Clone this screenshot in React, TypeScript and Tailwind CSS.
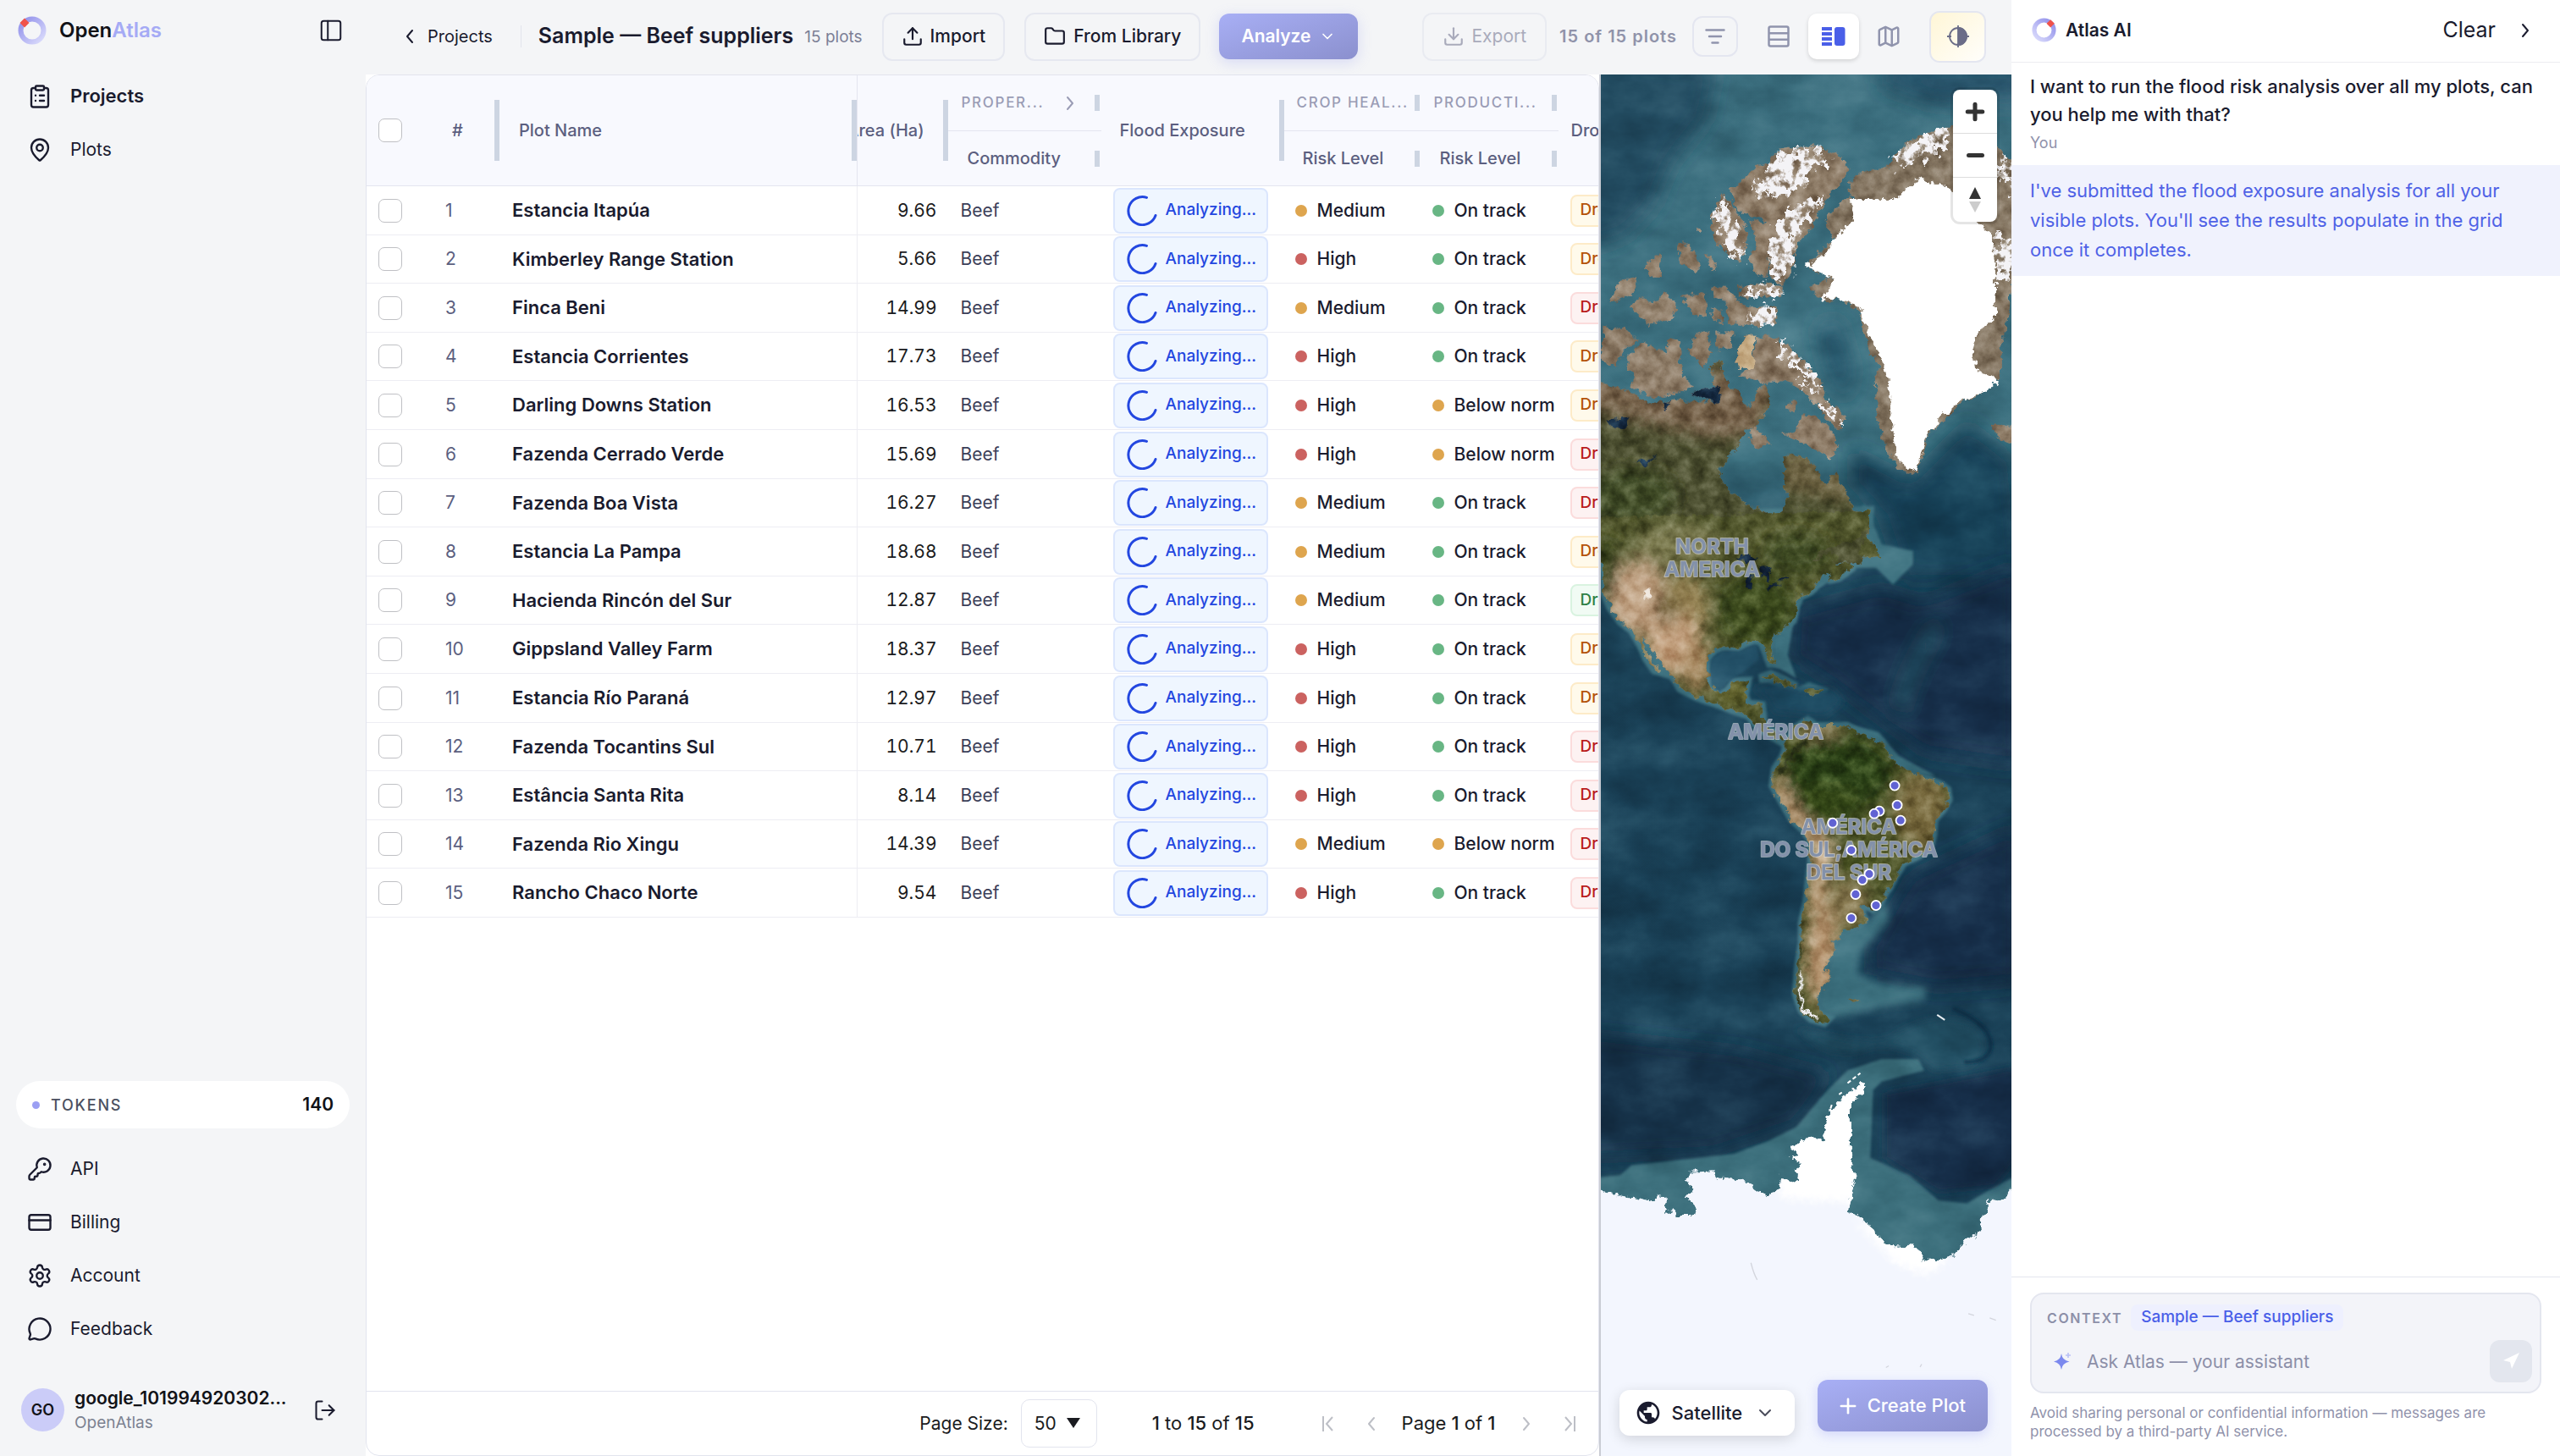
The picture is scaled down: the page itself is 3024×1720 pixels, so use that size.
import React from "react";
import {
  ClipboardList,
  CreditCard,
  Download,
  Folder,
  KeyRound,
  LogOut,
  Map as MapIcon,
  MapPin,
  MessageCircle,
  Navigation,
  PanelLeft,
  Plus,
  Settings,
  Upload,
} from "lucide-react";
import { MdPublic } from "react-icons/md";

type Level = "High" | "Medium";
type Production = "On track" | "Below norm";
type Drought = "amber" | "red" | "green";

interface Plot {
  name: string;
  area: string;
  crop: Level;
  production: Production;
  drought: Drought;
}

const plots: Plot[] = [
  { name: "Estancia Itapúa", area: "9.66", crop: "Medium", production: "On track", drought: "amber" },
  { name: "Kimberley Range Station", area: "5.66", crop: "High", production: "On track", drought: "amber" },
  { name: "Finca Beni", area: "14.99", crop: "Medium", production: "On track", drought: "red" },
  { name: "Estancia Corrientes", area: "17.73", crop: "High", production: "On track", drought: "amber" },
  { name: "Darling Downs Station", area: "16.53", crop: "High", production: "Below norm", drought: "amber" },
  { name: "Fazenda Cerrado Verde", area: "15.69", crop: "High", production: "Below norm", drought: "red" },
  { name: "Fazenda Boa Vista", area: "16.27", crop: "Medium", production: "On track", drought: "red" },
  { name: "Estancia La Pampa", area: "18.68", crop: "Medium", production: "On track", drought: "amber" },
  { name: "Hacienda Rincón del Sur", area: "12.87", crop: "Medium", production: "On track", drought: "green" },
  { name: "Gippsland Valley Farm", area: "18.37", crop: "High", production: "On track", drought: "amber" },
  { name: "Estancia Río Paraná", area: "12.97", crop: "High", production: "On track", drought: "amber" },
  { name: "Fazenda Tocantins Sul", area: "10.71", crop: "High", production: "On track", drought: "red" },
  { name: "Estância Santa Rita", area: "8.14", crop: "High", production: "On track", drought: "red" },
  { name: "Fazenda Rio Xingu", area: "14.39", crop: "Medium", production: "Below norm", drought: "red" },
  { name: "Rancho Chaco Norte", area: "9.54", crop: "High", production: "On track", drought: "red" },
];

const droughtStyle: Record<Drought, string> = {
  amber: "border-[#fdebc8] bg-[#fffaeb] text-[#b45309]",
  red: "border-[#fbdcdc] bg-[#fdf2f2] text-[#b91c1c]",
  green: "border-[#d9f3e0] bg-[#f1fbf4] text-[#2f8046]",
};

/* ---------- small drawings ---------- */

function Logo({ id, flip = false, className }: { id: string; flip?: boolean; className: string }) {
  return (
    <svg viewBox="0 0 34 34" className={className} aria-hidden="true">
      <defs>
        <linearGradient id={id} x1={flip ? "1" : "0"} y1="0" x2={flip ? "0" : "1"} y2="1">
          <stop offset="0" stopColor="#8f8eea" />
          <stop offset="1" stopColor="#dcddfc" />
        </linearGradient>
      </defs>
      <circle cx="17" cy="17" r="13.5" fill="none" stroke={`url(#${id})`} strokeWidth="6" />
      <path d={flip ? "M26 2.5l5.5 5.5-5.5 5.5-5.5-5.5z" : "M8 2.5l5.5 5.5-5.5 5.5-5.5-5.5z"} fill="#f0524b" />
    </svg>
  );
}

function Chevron({ dir, className }: { dir: "left" | "right" | "down"; className: string }) {
  const d = { left: "M15 5l-6 7 6 7", right: "M9 5l6 7-6 7", down: "M6 9l6 6 6-6" }[dir];
  return (
    <svg viewBox="0 0 24 24" fill="none" stroke="currentColor" strokeWidth="2" strokeLinecap="round" strokeLinejoin="round" className={className} aria-hidden="true">
      <path d={d} />
    </svg>
  );
}

function PageEdge({ end = false }: { end?: boolean }) {
  return (
    <svg viewBox="0 0 24 24" fill="none" stroke="currentColor" strokeWidth="2" className="size-6" aria-hidden="true">
      <path d={end ? "M7 4l7 8-7 8M18 3v18" : "M17 4l-7 8 7 8M6 3v18"} />
    </svg>
  );
}

function RowsIcon() {
  return (
    <svg viewBox="0 0 26 26" fill="none" stroke="currentColor" strokeWidth="2.5" className="size-[26px]" aria-hidden="true">
      <rect x="1.5" y="1.5" width="23" height="23" rx="2" />
      <path d="M1.5 9.2h23M1.5 16.8h23" />
    </svg>
  );
}

function SplitIcon() {
  return (
    <svg viewBox="0 0 28 22" fill="currentColor" className="h-[22px] w-7" aria-hidden="true">
      <path d="M0 0h12v4H0zM0 6h12v4H0zM0 12h12v4H0zM0 18h12v4H0z" />
      <rect x="15" y="0" width="12.5" height="22" rx="3" />
    </svg>
  );
}

function SunIcon() {
  return (
    <svg viewBox="0 0 28 28" fill="none" stroke="currentColor" strokeWidth="1.8" className="size-7" aria-hidden="true">
      <circle cx="14" cy="14" r="10" />
      <path d="M14 4a10 10 0 0 1 0 20z" fill="currentColor" />
      <path d="M14 1v5M14 22v5M1 14h5M22 14h5" />
    </svg>
  );
}

function SparkleIcon() {
  return (
    <svg viewBox="0 0 22 22" className="size-[22px]" aria-hidden="true">
      <path d="M9 2q1 8 9.5 9.5Q10 13 9 21q-1-8-9-9.5Q8 10 9 2z" fill="#7c89ee" />
      <path d="M17 1v6M14 4h6" stroke="#b9c0f6" strokeWidth="1.6" />
    </svg>
  );
}

function Spinner() {
  return (
    <svg viewBox="0 0 36 36" fill="none" stroke="#2347e0" strokeWidth="3" strokeLinecap="round" className="size-9 shrink-0" aria-hidden="true">
      <path d="M23.5 2.4A16.5 16.5 0 1 0 34 23.5" />
    </svg>
  );
}

/* ---------- sidebar ---------- */

function NavLink({ icon: Icon, label, active = false }: { icon: React.ElementType; label: string; active?: boolean }) {
  return (
    <a href="#" className="flex h-[63px] items-center gap-[21px] pl-8 text-[#1a1b2e]">
      <Icon className="size-[30px]" strokeWidth={1.9} />
      <span className={active ? "text-[22px] font-semibold" : "text-[21px]"}>{label}</span>
    </a>
  );
}

function Sidebar() {
  return (
    <aside className="flex w-[432px] shrink-0 flex-col bg-[#f4f5f7] pb-[23px]">
      <div className="mb-[10px] flex h-[72px] items-center pr-[26px] pl-[21px]">
        <Logo id="brand-ring" className="size-[34px]" />
        <span className="ml-[15px] text-[24px] font-semibold text-[#111217]">
          Open<span className="text-[#a5aaf5]">Atlas</span>
        </span>
        <button type="button" aria-label="Collapse sidebar" className="ml-auto text-[#1a1b2e]">
          <PanelLeft className="size-[30px]" strokeWidth={1.6} />
        </button>
      </div>
      <nav aria-label="Main">
        <NavLink icon={ClipboardList} label="Projects" active />
        <NavLink icon={MapPin} label="Plots" />
      </nav>
      <div className="mx-[19px] mt-auto mb-4 flex h-14 items-center rounded-full bg-white px-[19px]">
        <span className="size-[9px] rounded-full bg-[#9b9ff3]" />
        <span className="ml-[13px] text-[18px] font-medium tracking-widest text-[#4b5060]">TOKENS</span>
        <span className="ml-auto text-[21px] font-semibold text-[#111217]">140</span>
      </div>
      <nav aria-label="Account">
        <NavLink icon={KeyRound} label="API" />
        <NavLink icon={CreditCard} label="Billing" />
        <NavLink icon={Settings} label="Account" />
        <NavLink icon={MessageCircle} label="Feedback" />
      </nav>
      <div className="mt-[33px] flex h-[63px] items-center pr-[34px] pl-[25px]">
        <span className="flex size-[51px] items-center justify-center rounded-full bg-[#cbccf8] text-[18px] font-semibold text-[#111217]">GO</span>
        <div className="ml-3">
          <p className="text-[21px] leading-[30px] font-semibold text-[#111217]">google_101994920302...</p>
          <p className="text-[19px] leading-[28px] text-[#7c8291]">OpenAtlas</p>
        </div>
        <button type="button" aria-label="Log out" className="ml-auto text-[#1a1b2e]">
          <LogOut className="size-7" strokeWidth={1.75} />
        </button>
      </div>
    </aside>
  );
}

/* ---------- toolbar ---------- */

function Toolbar() {
  return (
    <header className="flex h-[88px] shrink-0 items-center bg-[#f4f5f7] pr-[30px] pb-[2px] pl-10 whitespace-nowrap text-[#1a1b2e]">
      <a href="#" className="flex items-center gap-[9px] text-[20px]">
        <Chevron dir="left" className="size-6" />
        Projects
      </a>
      <span className="ml-[33px] h-[26px] w-px bg-[#e2e4ec]" />
      <h1 className="ml-5 text-[25px] font-semibold">Sample — Beef suppliers</h1>
      <span className="mt-[3px] ml-[13px] text-[19px] text-[#7c8096]">15 plots</span>
      <button type="button" className="ml-[23px] flex h-[57px] items-center gap-2 rounded-xl border-2 border-[#e6e8f0] px-[21px] text-[21px] font-medium">
        <Upload className="size-[26px]" strokeWidth={2} />
        Import
      </button>
      <button type="button" className="ml-[23px] flex h-[57px] items-center gap-[9px] rounded-xl border-2 border-[#e6e8f0] px-[21px] text-[21px] font-medium">
        <Folder className="size-[26px]" strokeWidth={2} />
        From Library
      </button>
      <button type="button" className="ml-[22px] flex h-[54px] items-center gap-[9px] rounded-xl bg-linear-to-br from-[#a8aff5] to-[#8b90ce] px-[26px] text-[21px] font-semibold text-white shadow-[0_4px_16px_rgba(150,155,240,0.3)]">
        Analyze
        <Chevron dir="down" className="size-5" />
      </button>
      <button type="button" disabled className="ml-auto flex h-[57px] items-center gap-2 rounded-xl border-2 border-[#e9ebf1] px-[22px] text-[21px] text-[#a9abbb]">
        <Download className="size-[26px]" strokeWidth={2} />
        Export
      </button>
      <span className="ml-[15px] text-[20px] font-semibold tracking-wider text-[#9093aa]">15 of 15 plots</span>
      <button type="button" aria-label="Filter" className="ml-[18px] flex h-12 w-[54px] items-center justify-center rounded-xl border-2 border-[#e4e6f0] text-[#9094ad]">
        <svg viewBox="0 0 24 18" fill="none" stroke="currentColor" strokeWidth="2.5" strokeLinecap="round" className="h-[18px] w-6" aria-hidden="true">
          <path d="M1.5 1.5h21M5 9h14M8.5 16.5h7" />
        </svg>
      </button>
      <div className="mx-[18px] flex gap-[5px] text-[#9094ad]">
        <button type="button" aria-label="Grid view" className="flex h-[54px] w-[60px] items-center justify-center">
          <RowsIcon />
        </button>
        <button type="button" aria-label="Split view" aria-pressed="true" className="flex h-[54px] w-[60px] items-center justify-center rounded-[10px] bg-white text-[#4a5fe8] shadow-[0_2px_5px_rgba(0,0,0,0.14)]">
          <SplitIcon />
        </button>
        <button type="button" aria-label="Map view" className="flex h-[54px] w-[60px] items-center justify-center">
          <MapIcon className="size-[30px]" />
        </button>
      </div>
      <button type="button" aria-label="Toggle contrast" className="flex h-[61px] w-[67px] items-center justify-center rounded-xl border-2 border-[#e4e6f0] bg-linear-to-br from-[#fff6d6] to-[#fffefb] text-[#6b6d88]">
        <SunIcon />
      </button>
    </header>
  );
}

/* ---------- grid ---------- */

const th = "p-0 border-b border-[#e4e5ef] bg-[#f8f9fe] font-medium text-[20px] text-[#5c5f80] text-left";
const td = "p-0 border-b border-[#ededf3] overflow-hidden";
const checkbox = "block size-7 appearance-none rounded-[7px] border border-[#bfc0c4] bg-white checked:bg-[#4a5fe8]";

function HeadCell({ children, tall = false, className = "" }: { children: React.ReactNode; tall?: boolean; className?: string }) {
  return (
    <div className={`flex items-center justify-between overflow-hidden whitespace-nowrap ${className}`}>
      {children}
      <span className={tall ? "h-[72px] w-[6px] shrink-0 bg-[#cdd5e2]" : "mr-[2px] h-[19px] w-[6px] shrink-0 bg-[#cdd5e2]"} />
    </div>
  );
}

function Status({ label }: { label: Level | Production }) {
  const dot = label === "High" ? "bg-[#cb6260]" : label === "On track" ? "bg-[#68b684]" : "bg-[#dea54e]";
  return (
    <div className="flex items-center gap-3 pl-[13px] text-[21px] font-medium whitespace-nowrap text-[#1a1b2e]">
      <span className={`size-[14px] shrink-0 rounded-full ${dot}`} />
      {label}
    </div>
  );
}

function Grid() {
  return (
    <section aria-label="Plots" className="flex min-w-0 flex-3 flex-col bg-white">
      <div className="flex grow flex-col overflow-hidden rounded-2xl border border-[#e2e4ee] bg-white">
        <table className="w-full table-fixed border-separate border-spacing-0">
          <colgroup>
            <col className="w-[72px]" />
            <col className="w-[85px]" />
            <col />
            <col className="w-[107px]" />
            <col className="w-[181px]" />
            <col className="w-[216px]" />
            <col className="w-[162px]" />
            <col className="w-[162px]" />
            <col className="w-[47px]" />
          </colgroup>
          <thead>
            <tr className="h-[66px]">
              <th rowSpan={2} className={`${th} pl-[14px]`}>
                <input type="checkbox" aria-label="Select all plots" className={checkbox} />
              </th>
              <th rowSpan={2} className={th}>
                <HeadCell tall className="pl-[29px]">#</HeadCell>
              </th>
              <th rowSpan={2} className={`${th} border-r`}>
                <HeadCell tall className="pl-[23px]">Plot Name</HeadCell>
              </th>
              <th rowSpan={2} className={th}>
                <div className="flex items-center justify-end gap-[22px] overflow-hidden whitespace-nowrap">
                  Area (Ha)
                  <span className="h-[72px] w-[6px] shrink-0 bg-[#cdd5e2]" />
                </div>
              </th>
              <th className={th}>
                <div className="flex items-center pl-4 text-[17px] tracking-widest whitespace-nowrap text-[#9a9cb5]">
                  PROPER...
                  <Chevron dir="right" className="ml-auto size-6" />
                  <span className="mr-[2px] ml-[17px] h-[19px] w-[6px] shrink-0 bg-[#cdd5e2]" />
                </div>
              </th>
              <th rowSpan={2} className={th}>
                <HeadCell tall className="pl-[22px]">Flood Exposure</HeadCell>
              </th>
              <th className={th}>
                <HeadCell className="pl-[15px] text-[17px] tracking-widest text-[#9a9cb5]">CROP HEAL...</HeadCell>
              </th>
              <th className={th}>
                <HeadCell className="pl-[15px] text-[17px] tracking-widest text-[#9a9cb5]">PRODUCTI...</HeadCell>
              </th>
              <th rowSpan={2} className={`${th} overflow-hidden pl-[15px] whitespace-nowrap`}>Drought</th>
            </tr>
            <tr className="h-[65px]">
              <th className={th}>
                <HeadCell className="pl-[23px]">Commodity</HeadCell>
              </th>
              <th className={th}>
                <HeadCell className="pl-[22px]">Risk Level</HeadCell>
              </th>
              <th className={th}>
                <HeadCell className="pl-[22px]">Risk Level</HeadCell>
              </th>
            </tr>
          </thead>
          <tbody>
            {plots.map((p, i) => (
              <tr key={p.name} className="h-[58px] [&:nth-child(5n+2)]:h-[57px] [&:nth-child(5n+4)]:h-[57px]">
                <td className={`${td} pl-[14px]`}>
                  <input type="checkbox" aria-label={`Select ${p.name}`} className={checkbox} />
                </td>
                <td className={`${td} pl-[21px] text-[21px] text-[#5c5f80]`}>{i + 1}</td>
                <td className={`${td} border-r pl-[15px] text-[22px] font-semibold whitespace-nowrap text-[#1a1b2e]`}>{p.name}</td>
                <td className={`${td} pr-[13px] text-right text-[21px] text-[#1a1b20] tabular-nums`}>{p.area}</td>
                <td className={`${td} pl-[15px] text-[21px] text-[#3c4059]`}>Beef</td>
                <td className={`${td} pl-[14px]`}>
                  <div className="flex h-[54px] w-[183px] items-center gap-[10px] rounded-lg border-2 border-[#dbe6fd] bg-[#eff6ff] pl-[14px] text-[19px] font-medium text-[#2347e0]">
                    <Spinner />
                    Analyzing...
                  </div>
                </td>
                <td className={td}>
                  <Status label={p.crop} />
                </td>
                <td className={td}>
                  <Status label={p.production} />
                </td>
                <td className={`${td} pl-[14px]`}>
                  <div className={`flex h-[38px] w-[120px] items-center rounded-lg border-2 pl-[10px] text-[19px] font-medium ${droughtStyle[p.drought]}`}>Drought</div>
                </td>
              </tr>
            ))}
          </tbody>
        </table>
        <footer className="mt-auto flex h-[76px] items-center justify-end border-t border-[#e2e4ee] pr-[22px] text-[21px] whitespace-nowrap text-[#1a1b20]">
          <label htmlFor="page-size">Page Size:</label>
          <div className="relative ml-[15px]">
            <select id="page-size" defaultValue="50" className="h-[57px] w-[90px] appearance-none rounded-[10px] border border-[#e2e4ee] bg-white pl-[15px]">
              <option>50</option>
            </select>
            <svg viewBox="0 0 16 12" className="pointer-events-none absolute top-[22px] right-5 h-3 w-4" aria-hidden="true">
              <path d="M0 0h16L8 12z" fill="#1a1b20" />
            </svg>
          </div>
          <p className="ml-[65px] text-[22px]">
            <span className="font-medium">1</span> to <span className="font-medium">15</span> of <span className="font-medium">15</span>
          </p>
          <div className="ml-[75px] flex items-center text-[#bdbfc6]">
            <button type="button" disabled aria-label="First page">
              <PageEdge />
            </button>
            <button type="button" disabled aria-label="Previous page" className="ml-[27px]">
              <Chevron dir="left" className="size-6" />
            </button>
            <p className="mx-6 text-[22px] text-[#1a1b20]">
              Page <span className="font-medium">1</span> of <span className="font-medium">1</span>
            </p>
            <button type="button" disabled aria-label="Next page">
              <Chevron dir="right" className="size-6" />
            </button>
            <button type="button" disabled aria-label="Last page" className="ml-[27px]">
              <PageEdge end />
            </button>
          </div>
        </footer>
      </div>
    </section>
  );
}

/* ---------- map ---------- */

const northA =
  "M0 1040L20 1050 60 1060 110 1075 150 1090 170 1115 230 1110 270 1100 320 1110 370 1105 420 1110 410 1030 400 990 430 970 460 1060 490 1070 510 1100 530 1130 550 1100 570 1060 590 1055 605 1075 600 1130 570 1180 530 1200 500 1245 460 1290 430 1330 435 1370 470 1410 520 1440 570 1465 595 1470 600 1500 620 1545 635 1530 630 1480 655 1460 668 1420 655 1380 660 1330 650 1290 700 1285 740 1300 770 1330 790 1370 810 1385 835 1340 850 1370 880 1420 900 1460 960 1500 955 1540 930 1640 0 1640Z";
const northB =
  "M0 -20L960 -40 955 10 900 50 840 60 800 75 750 110 770 110 830 80 845 95 830 120 850 120 890 115 895 130 850 160 820 165 810 150 780 165 760 190 750 200 715 215 700 245 690 285 650 310 615 345 610 375 625 415 605 415 590 380 575 350 550 345 520 355 495 370 460 365 420 370 395 390 385 430 395 480 420 505 455 500 480 470 530 468 520 510 530 535 580 540 585 590 600 612 640 628 660 640 650 650 600 625 560 600 530 570 480 555 420 535 350 515 290 490 270 460 230 420 190 370 160 335 160 360 190 400 220 440 200 435 170 400 150 360 120 315 80 290 45 250 20 200 25 150 10 90 0 40Z M940 40L975 55 995 100 950 100 910 90 930 60Z M570 460L610 448 660 465 700 485 650 480 610 462Z M720 495L745 485 790 498 780 508 730 508Z";
const south =
  "M665 650L690 610 740 580 770 600 830 600 880 600 920 620 950 640 1000 650 1030 690 1050 715 1110 740 1160 755 1210 775 1235 790 1240 820 1220 850 1190 880 1185 930 1170 970 1130 990 1080 1010 1055 1045 1030 1085 1010 1105 1000 1125 970 1150 945 1140 930 1145 945 1180 920 1200 870 1210 850 1235 830 1240 835 1270 810 1300 795 1330 815 1340 805 1370 780 1390 770 1430 790 1460 820 1470 800 1488 750 1475 715 1450 695 1400 700 1330 715 1250 715 1190 730 1130 740 1060 750 990 745 940 720 910 680 880 640 820 612 780 620 730 650 690Z";
const arctic =
  "M590 330L640 280 760 262 850 295 882 340 860 385 800 440 750 540 700 590 680 690 650 720 610 700 600 620 570 560 590 510 540 495 490 470 465 410 520 370 560 330Z M435 425L470 450 520 530 530 590 490 650 440 600 405 560 400 500Z M540 510L590 530 600 600 600 700 560 690 530 640 560 590Z M455 760L500 780 560 800 630 795 630 850 520 858 460 845Z M500 730L560 715 655 725 650 760 500 765Z M500 930L520 890 558 890 545 940 550 1000 495 1000 492 960Z M560 895L620 895 680 930 740 990 790 1040 800 1100 875 1160 850 1210 800 1150 740 1090 700 1060 650 1040 600 1050 500 1020 545 990Z M655 1215L700 1210 720 1150 770 1160 830 1210 845 1260 820 1295 760 1260 700 1235Z M415 880L485 880 465 930 420 940Z M350 890L390 880 400 940 375 995 320 940Z M100 960L160 910 200 930 240 950 250 900 290 910 290 980 300 1020 340 1060 280 1080 200 1095 120 1060 130 1020 110 1000Z M20 865L100 870 145 905 90 940 70 990 15 980Z M45 780L80 710 140 700 130 750Z M115 800L150 760 200 790 230 745 280 790 270 830 180 855Z M295 760L380 750 385 830 340 820Z M280 590L320 590 365 660 340 680 290 640Z M175 650L220 625 215 700 180 690Z M380 620L420 650 405 675Z M400 730L460 735 490 770 450 780 410 755Z M405 800L440 810 440 850 410 840Z M540 1190L570 1200 610 1250 560 1260 535 1240Z M670 1110L700 1105 690 1140 665 1135Z M355 530L370 535 365 555 352 545Z M1390 1180L1464 1190 1464 1250 1410 1230Z";
const greenland =
  "M875 390L940 345 1020 340 1060 280 1130 230 1250 200 1400 270 1480 330 1480 640 1450 760 1440 880 1420 900 1420 1020 1350 1080 1280 1110 1210 1180 1165 1210 1140 1290 1125 1350 1060 1330 1020 1280 985 1170 985 1090 975 1020 1000 1000 950 930 920 810 860 770 800 780 745 730 830 700 730 660 800 600 830 570 800 510 860 445 900 430Z";
const greenlandIce =
  "M890 440L1050 440 1130 370 1230 400 1300 480 1390 560 1400 700 1400 830 1330 880 1320 960 1340 1010 1415 1035 1350 1085 1275 1108 1210 1160 1165 1210 1140 1280 1120 1338 1060 1310 1040 1230 1030 1080 1010 990 955 890 925 800 840 765 790 775 830 700 730 660 810 620 840 560 900 510Z";
const arcticIce =
  "M600 330L650 285 760 275 820 300 780 330 720 390 640 430 560 430 540 400 580 370Z M440 440L455 450 500 560 505 640 470 630 430 540 420 490Z M640 500L720 450 800 430 750 500 690 570 695 640 650 705 612 700 608 610Z M540 815L600 795 628 810 625 850 520 855Z M520 745L600 725 650 735 640 755 560 752Z M620 900L665 925 720 980 770 1030 785 1080 730 1030 660 960Z M700 1030L740 1050 725 1065Z M800 1115L860 1165 850 1185 800 1140Z M1040 310L1130 240 1240 205 1250 260 1130 310 1050 330Z M1400 290L1470 350 1470 420 1420 380Z M1400 560L1464 580 1464 680 1410 700Z";
const antarctica =
  "M-10 610L60 625 140 640 200 655 215 635 245 645 235 700 262 685 280 700 340 700 345 670 315 640 335 610 310 580 325 550 410 545 420 570 510 575 560 610 600 632 640 600 645 565 690 590 720 580 690 540 720 520 675 505 710 485 680 465 745 425 790 440 805 400 800 360 840 310 900 255 940 230 930 270 890 310 890 480 905 570 885 680 980 760 1025 810 1080 815 1115 800 1150 860 1205 863 1250 845 1300 790 1355 750 1345 720 1375 690 1370 650 1425 645 1480 575 1480 1600 -10 1600Z";

const pins: [number, number][] = [
  [2238, 928], [2241, 951], [2220, 958], [2214, 961], [2245, 969], [2165, 972],
  [2187, 1004], [2208, 1032], [2200, 1039], [2192, 1056], [2216, 1069], [2187, 1084],
];

function MapArt() {
  const a = "translate(1888 80) scale(.3347 .3571)";
  const b = "translate(1888 620) scale(.3347 .3953)";
  const c = "translate(1888 1200) scale(.3347 .3333)";
  return (
    <svg viewBox="1892 88 484 1632" preserveAspectRatio="xMidYMid slice" className="absolute inset-0 size-full" role="img" aria-label="Satellite map of the Americas">
      <defs>
        <filter id="terrain" x="-5%" y="-5%" width="110%" height="110%" colorInterpolationFilters="sRGB">
          <feTurbulence type="fractalNoise" baseFrequency="0.12" numOctaves="4" seed="4" result="n" />
          <feDisplacementMap in="SourceGraphic" in2="n" scale="11" xChannelSelector="R" yChannelSelector="G" result="d" />
          <feTurbulence type="fractalNoise" baseFrequency="0.06" numOctaves="6" seed="21" result="t" />
          <feColorMatrix in="t" values=".9 0 0 0 .06 .9 0 0 0 .06 .9 0 0 0 .06 0 0 0 0 1" result="g" />
          <feComposite in="g" in2="d" operator="in" result="m" />
          <feBlend in="m" in2="d" mode="soft-light" />
        </filter>
        <filter id="rough" x="-5%" y="-5%" width="110%" height="110%" colorInterpolationFilters="sRGB">
          <feTurbulence type="fractalNoise" baseFrequency="0.04" numOctaves="4" seed="9" result="n" />
          <feDisplacementMap in="SourceGraphic" in2="n" scale="34" xChannelSelector="R" yChannelSelector="G" />
        </filter>
        <filter id="jagged" x="-10%" y="-10%" width="120%" height="120%" colorInterpolationFilters="sRGB">
          <feTurbulence type="fractalNoise" baseFrequency="0.035" numOctaves="4" seed="2" result="n" />
          <feDisplacementMap in="SourceGraphic" in2="n" scale="90" xChannelSelector="R" yChannelSelector="G" result="d" />
          <feColorMatrix in="n" values="0 0 0 0 1 0 0 0 0 1 0 0 0 0 1 0 0 5 0 -1.6" result="k" />
          <feComposite in="d" in2="k" operator="in" />
        </filter>
        <filter id="seabed" x="0" y="0" width="100%" height="100%" colorInterpolationFilters="sRGB">
          <feTurbulence type="fractalNoise" baseFrequency="0.014 0.022" numOctaves="6" seed="12" result="n" />
          <feColorMatrix in="n" values=".4 0 0 0 .3 .4 0 0 0 .3 .4 0 0 0 .3 0 0 0 0 1" result="g" />
          <feBlend in="g" in2="SourceGraphic" mode="soft-light" />
        </filter>
        <filter id="soft4" x="-30%" y="-30%" width="160%" height="160%"><feGaussianBlur stdDeviation="4" /></filter>
        <filter id="soft12" x="-50%" y="-50%" width="200%" height="200%"><feGaussianBlur stdDeviation="12" /></filter>
        <filter id="soft20" x="-60%" y="-60%" width="220%" height="220%"><feGaussianBlur stdDeviation="24" /></filter>
        <filter id="soft40" x="-60%" y="-60%" width="220%" height="220%"><feGaussianBlur stdDeviation="32" /></filter>
        <linearGradient id="sea" x1="0" y1="0" x2="0" y2="1">
          <stop offset="0" stopColor="#3b6e7e" />
          <stop offset=".28" stopColor="#3d7180" />
          <stop offset=".36" stopColor="#1c4459" />
          <stop offset=".5" stopColor="#1a4157" />
          <stop offset="1" stopColor="#183e54" />
        </linearGradient>
        <clipPath id="clipNA"><path d={northA} /></clipPath>
        <clipPath id="clipNB"><path d={northB} /></clipPath>
        <clipPath id="clipS"><path d={south} /></clipPath>
        <clipPath id="clipAnt"><path d={antarctica} /></clipPath>
      </defs>

      <g filter="url(#seabed)">
        <rect x="1880" y="80" width="510" height="1660" fill="url(#sea)" />
        <g transform={a} filter="url(#soft40)">
          <path d="M-100 -50L420 0 380 180 260 320 200 460 100 560 -100 620Z" fill="#224b60" />
          <path d="M1000 0L1500 0 1500 130 1180 120 1000 60Z" fill="#26536a" />
          <path d="M770 860L850 840 900 1000 880 1100 820 1040Z" fill="#28566c" />
          <path d="M900 1270L1100 1370 1300 1180 1460 1300 1500 1700 1080 1700 1000 1480 900 1380Z" fill="#183f57" />
        </g>
        <g transform={b} filter="url(#soft40)">
          <path d="M700 260L1000 190 1150 230 1480 120 1480 720 1150 680 960 560 820 470 690 400Z" fill="#122f49" />
          <path d="M1100 1050L1480 900 1480 1360 1200 1380 960 1340 960 1260Z" fill="#122e48" />
          <path d="M1200 300Q1100 420 1060 560" stroke="#275266" strokeWidth="40" fill="none" />
        </g>
        <g transform={c}>
          <path d="M-50 60L500 120 820 200 700 380 400 480 -50 500Z" fill="#133149" filter="url(#soft40)" />
          <path d="M-10 570L80 560 120 525 300 505 480 485 600 440 700 390 800 270 880 190 1000 150 1130 150 1150 190 1000 230 970 260 960 500 1100 560 1200 650 1300 660 1400 600 1480 560 1480 900 -10 900Z" fill="#3e707d" filter="url(#soft4)" />
          <path d="M1010 270L1480 180 1480 500 1400 600 1200 620 1010 500Z" fill="#142f48" filter="url(#soft12)" />
          <path d="M700 40Q1000 120 1050 60Q1200 -30 1330 30Q1410 120 1300 180L1180 190Q1100 90 960 110Q820 170 700 40Z" fill="#244f63" filter="url(#soft12)" />
          <path d="M1250 -30Q1390 30 1385 110Q1370 165 1290 160" stroke="#10304a" strokeWidth="14" fill="none" filter="url(#soft4)" />
        </g>
        <g transform={b} fill="#3e717f">
          <path d={northB} stroke="#3e717f" strokeWidth="26" filter="url(#soft4)" />
          <path d={south} stroke="#3e717f" strokeWidth="20" filter="url(#soft4)" />
          <path d="M940 -60L1000 60 1110 80 1110 120 1040 180 980 130 900 130 800 180 740 215 690 230 760 150Z" filter="url(#soft4)" />
          <path d="M620 320L690 290 670 390 700 460 660 440 620 420Z" filter="url(#soft4)" />
          <path d="M830 1240L870 1205 960 1180 1010 1120 1030 1180 930 1270 915 1340 1000 1370 1160 1380 1150 1420 1000 1440 850 1470 780 1470 770 1420Z" filter="url(#soft12)" />
          <path d="M860 590L990 620 1060 690 1190 750 1100 740 1000 690Z" filter="url(#soft4)" />
        </g>
        <path transform={b} d="M395 405L440 378 500 378 560 360 570 400 530 430 460 470 430 500 400 480Z" fill="#234f66" filter="url(#soft4)" />
        <path transform={b} d="M540 490L640 470 720 490 830 490 870 530 800 575 620 560 600 520Z" fill="#1f4a61" filter="url(#soft12)" />
      </g>

      <g filter="url(#terrain)">
        <g transform={a}>
          <path d={arctic} fill="#8d7b66" />
          <path d="M500 930L520 890 558 890 545 940 550 1000 495 1000 492 960Z" fill="#c6ac85" />
          <path d={greenland} fill="#857662" />
          <g clipPath="url(#clipNA)">
            <rect x="-10" y="900" width="1000" height="760" fill="#4c4f30" />
            <path d="M-50 1000L660 1000 560 1220 400 1230 150 1180 -50 1130Z" fill="#77634b" filter="url(#soft20)" />
            <path d="M640 1270L980 1270 980 1450 760 1420 640 1400Z" fill="#6b6040" filter="url(#soft20)" />
            <ellipse cx="120" cy="1420" rx="160" ry="90" fill="#3f4c28" filter="url(#soft20)" />
            <ellipse cx="300" cy="1640" rx="160" ry="90" fill="#7c7a4f" filter="url(#soft20)" />
          </g>
          <path d="M30 1170L110 1160 90 1200 60 1195Z M330 1080L430 1060 430 1110 380 1100Z M140 1310L210 1290 160 1320Z M225 1110L260 1105 245 1140Z" fill="#14283f" />
        </g>
        <g transform={b}>
          <g clipPath="url(#clipNB)">
            <rect x="-10" y="-90" width="1020" height="760" fill="#51562c" />
            <g filter="url(#soft20)">
              <ellipse cx="280" cy="60" rx="150" ry="60" fill="#7c7a4f" />
              <ellipse cx="140" cy="220" rx="115" ry="115" fill="#c0a283" />
              <ellipse cx="300" cy="250" rx="90" ry="100" fill="#9a8758" />
              <ellipse cx="270" cy="360" rx="100" ry="95" fill="#c3a17f" />
              <ellipse cx="350" cy="420" rx="50" ry="80" fill="#a88a62" />
              <ellipse cx="560" cy="260" rx="140" ry="110" fill="#3a4a1f" />
              <ellipse cx="35" cy="130" rx="30" ry="90" fill="#37451f" />
              <ellipse cx="480" cy="500" rx="60" ry="40" fill="#6a6a30" />
              <ellipse cx="245" cy="250" rx="40" ry="50" fill="#6a5a33" />
              <ellipse cx="700" cy="90" rx="120" ry="60" fill="#3c4a24" />
            </g>
            <ellipse cx="175" cy="208" rx="14" ry="16" fill="#efe6dc" />
          </g>
          <path d="M480 105L520 85 560 105 540 115ZM525 150L545 150 540 195 522 190ZM570 120L610 130 600 170 580 150ZM590 185L650 175 600 195ZM640 160L675 157 670 166 640 168Z" fill="#14263d" />
          <g clipPath="url(#clipS)">
            <rect x="590" y="560" width="680" height="960" fill="#4e5529" />
            <g filter="url(#soft20)">
              <ellipse cx="850" cy="740" rx="190" ry="110" fill="#2c4119" />
              <ellipse cx="790" cy="840" rx="150" ry="60" fill="#314519" />
              <ellipse cx="1140" cy="850" rx="100" ry="120" fill="#77693c" />
              <ellipse cx="780" cy="610" rx="80" ry="25" fill="#8d7c55" />
              <path d="M620 770L700 890 780 940 780 1040 755 1150" stroke="#c9a37f" strokeWidth="46" fill="none" />
              <path d="M800 940L800 1030" stroke="#dcbfa0" strokeWidth="50" />
              <ellipse cx="870" cy="1130" rx="90" ry="70" fill="#8a7c53" />
              <ellipse cx="790" cy="1290" rx="60" ry="150" fill="#b6946f" />
              <ellipse cx="910" cy="1000" rx="80" ry="40" fill="#45501f" />
            </g>
            <path d="M640 750L700 670 740 640" stroke="#2a3017" strokeWidth="12" fill="none" filter="url(#soft4)" />
            <path d="M715 1240L700 1340 705 1430" stroke="#46502f" strokeWidth="22" fill="none" filter="url(#soft4)" />
            <path d="M716 1330L716 1400 724 1450 780 1474" stroke="#f1f0f3" strokeWidth="8" fill="none" />
          </g>
          <path d="M885 1415L910 1408 930 1415 900 1424Z" fill="#6b6a45" />
        </g>
      </g>
      <g transform={a} fill="#f4f3f6">
        <path d={arcticIce} filter="url(#jagged)" />
        <path d={greenlandIce} fill="#ffffff" filter="url(#rough)" />
      </g>
      <g transform={c}>
        <g filter="url(#rough)">
          <g clipPath="url(#clipAnt)">
            <rect x="-10" y="200" width="1500" height="1400" fill="#f3f6fe" />
            <path d="M640 640L900 660 960 200 840 300 660 460 640 560Z M900 720L1120 800 1240 860 1160 910 1060 880Z" fill="#ffffff" filter="url(#soft12)" />
          </g>
        </g>
        <path d="M850 275L860 268M880 235L925 200M820 325L825 310" stroke="#ffffff" strokeWidth="6" strokeDasharray="14 9" />
        <path d="M540 870Q550 910 562 930M1015 1240l10-6M1135 1238l6-10M1305 1050l20 6M1380 1065l22 8" stroke="#d3d5dd" strokeWidth="4" fill="none" />
      </g>
      <path d="M2288 1198l9 6" stroke="#e8eef2" strokeWidth="2" />

      <g fontFamily="Inter, sans-serif" fontSize="24" fontWeight="700" textAnchor="middle" fill="#8391aa" stroke="#dfe1e4" strokeOpacity=".6" strokeWidth="2" strokeLinejoin="round" style={{ paintOrder: "stroke" }}>
        <text x="2023" y="655">NORTH</text>
        <text x="2023" y="682">AMERICA</text>
        <text x="2098" y="873">AMÉRICA</text>
        <text x="2184" y="985">AMÉRICA</text>
        <text x="2184" y="1012">DO SUL;AMÉRICA</text>
        <text x="2184" y="1039">DEL SUR</text>
      </g>
      {pins.map(([x, y]) => (
        <circle key={`${x}-${y}`} cx={x} cy={y} r="5.5" fill="#6163d3" stroke="#ffffff" strokeWidth="1.8" />
      ))}
    </svg>
  );
}

function MapPanel() {
  return (
    <section aria-label="Map" className="relative min-w-0 flex-1 overflow-hidden border-l-2 border-[#c9ccd4]">
      <MapArt />
      <div className="absolute top-[18px] right-[17px] flex w-[52px] flex-col divide-y divide-[#dddddd] rounded-lg bg-white text-[#333333] shadow-[0_0_0_3px_rgba(0,0,0,0.1)]">
        <button type="button" aria-label="Zoom in" className="flex h-[52px] items-center justify-center">
          <Plus className="size-[30px]" strokeWidth={4} />
        </button>
        <button type="button" aria-label="Zoom out" className="flex h-[52px] items-center justify-center">
          <span className="h-[5px] w-[21px] rounded-full bg-current" />
        </button>
        <button type="button" aria-label="Reset bearing" className="flex h-[52px] items-center justify-center">
          <svg viewBox="0 0 16 32" className="h-8 w-4" aria-hidden="true">
            <path d="M8 1l7 14H1z" fill="#333333" />
            <path d="M8 31l7-13H1z" fill="#cccccc" />
          </svg>
        </button>
      </div>
      <button type="button" className="absolute bottom-6 left-[22px] flex h-[54px] items-center rounded-xl bg-white pr-[23px] pl-[18px] text-[22px] font-medium text-[#1a1b2e] shadow-[0_4px_16px_rgba(0,0,0,0.14)]">
        <MdPublic className="mr-3 size-8" />
        Satellite
        <Chevron dir="down" className="ml-[15px] size-6 text-[#4b4d5c]" />
      </button>
      <button type="button" className="absolute right-7 bottom-[29px] flex h-[61px] items-center gap-[9px] rounded-xl bg-linear-to-br from-[#a8aff5] to-[#8b90ce] pr-[26px] pl-[22px] text-[22px] font-medium whitespace-nowrap text-white shadow-[0_4px_14px_rgba(150,155,240,0.35)]">
        <Plus className="size-7" strokeWidth={2.25} />
        Create Plot
      </button>
    </section>
  );
}

/* ---------- assistant ---------- */

function Assistant() {
  return (
    <aside className="flex w-[648px] shrink-0 flex-col bg-white text-[#1a1b2e]">
      <header className="flex h-[74px] items-center border-b border-[#ecedf1] pr-[29px] pb-[2px] pl-6">
        <Logo id="assistant-ring" flip className="size-[29px]" />
        <h2 className="ml-[11px] text-[21px] font-semibold">Atlas AI</h2>
        <button type="button" className="ml-auto text-[25px]">Clear</button>
        <button type="button" aria-label="Hide assistant" className="ml-[23px]">
          <Chevron dir="right" className="size-6" />
        </button>
      </header>
      <div className="px-[22px] pt-3 pb-[10px]">
        <p className="text-[22px] leading-[33px] font-medium">I want to run the flood risk analysis over all my plots, can you help me with that?</p>
        <p className="text-[18px] leading-[33px] text-[#9092ab]">You</p>
      </div>
      <div className="bg-[#f0f2fd] px-[22px] py-[13px]">
        <p className="text-[22px] leading-[35px] text-[#4f62e6]">I've submitted the flood exposure analysis for all your visible plots. You'll see the results populate in the grid once it completes.</p>
      </div>
      <div className="mt-auto border-t border-[#e4e6ee] px-[22px] py-[18px]">
        <div className="rounded-2xl border-2 border-[#e4e6ef] bg-[#f3f4f9] pt-3 pr-[9px] pb-[11px] pl-[18px]">
          <div className="flex items-center gap-[10px]">
            <span className="text-[16px] font-semibold tracking-widest text-[#8c8fa8]">CONTEXT</span>
            <span className="flex h-[31px] items-center rounded-lg bg-[#eef0fe] px-3 text-[19px] font-medium text-[#4a5fe8]">Sample — Beef suppliers</span>
          </div>
          <div className="mt-[11px] flex items-center">
            <span className="ml-2">
              <SparkleIcon />
            </span>
            <input type="text" aria-label="Ask Atlas" placeholder="Ask Atlas — your assistant" className="ml-[17px] h-[50px] grow bg-transparent text-[21px] outline-none placeholder:text-[#8c8fa8]" />
            <button type="button" aria-label="Send" className="flex size-[50px] items-center justify-center rounded-xl bg-[#e3e6ee] text-white">
              <Navigation className="size-6" fill="currentColor" strokeWidth={0} />
            </button>
          </div>
        </div>
        <p className="mt-3 text-[17px] leading-[22px] text-[#9092ab]">Avoid sharing personal or confidential information — messages are processed by a third-party AI service.</p>
      </div>
    </aside>
  );
}

export default function App() {
  return (
    <div className="flex h-screen min-h-[1100px] w-full overflow-hidden bg-white font-['Inter',sans-serif]">
      <Sidebar />
      <main className="flex min-w-0 grow flex-col">
        <Toolbar />
        <div className="flex min-h-0 grow">
          <Grid />
          <MapPanel />
        </div>
      </main>
      <Assistant />
    </div>
  );
}
